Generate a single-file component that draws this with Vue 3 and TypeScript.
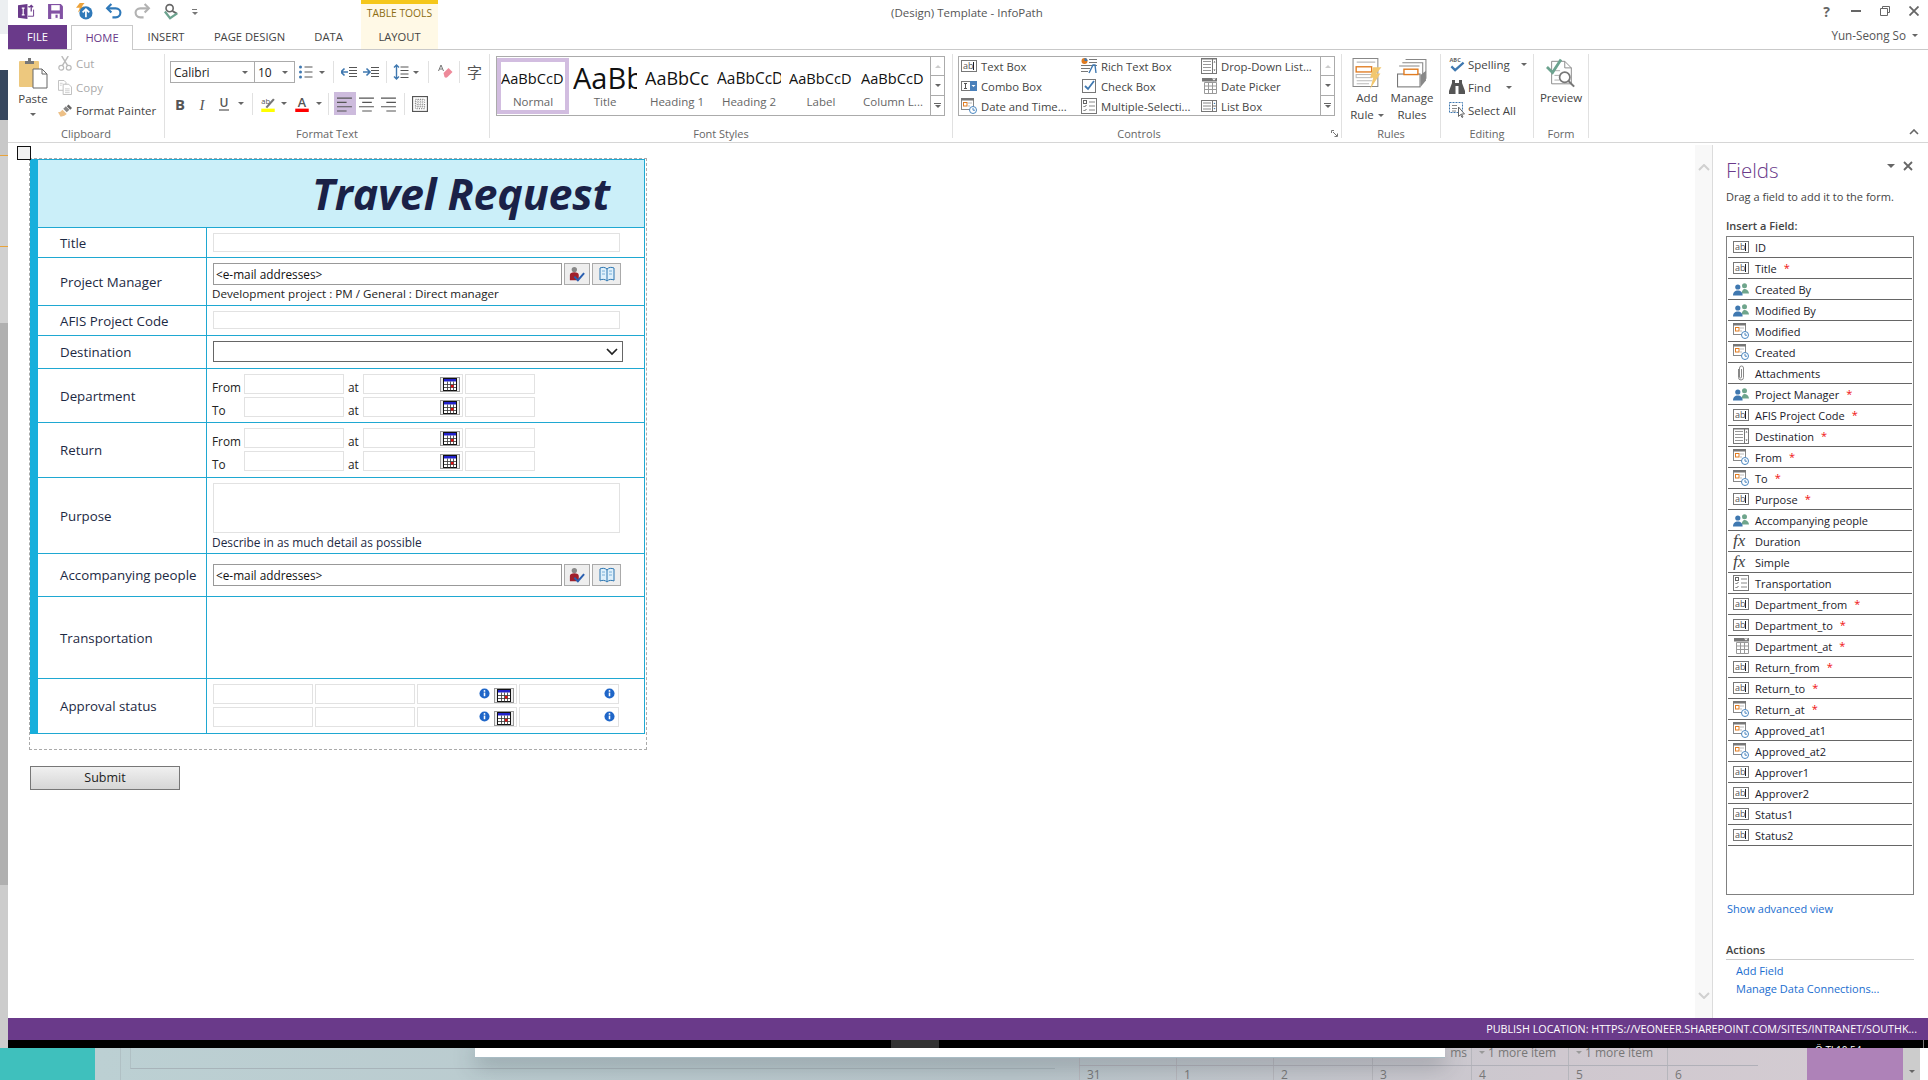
<script setup lang="ts">
interface Tool { w: number; icon?: string; caret?: boolean; sep?: boolean; active?: boolean }
interface Field { name: string; icon: string; req?: boolean }

const qat = ['qLogo', 'qSave', 'qPublish', 'qUndo', 'qRedo', 'qCheck']

const fmtTop: Tool[] = [
  { w: 21, icon: 'bullets' }, { w: 12, caret: true }, { w: 10, sep: true },
  { w: 22, icon: 'outdent' }, { w: 22, icon: 'indent' }, { w: 8, sep: true },
  { w: 21, icon: 'spacing' }, { w: 10, caret: true }, { w: 14, sep: true },
  { w: 20, icon: 'eraser' }, { w: 8, sep: true }, { w: 24, icon: 'zi' },
]
const fmtBottom: Tool[] = [
  { w: 20, icon: 'bold' }, { w: 24, icon: 'italic' }, { w: 20, icon: 'under' },
  { w: 14, caret: true }, { w: 8, sep: true }, { w: 24, icon: 'hilite' },
  { w: 8, caret: true }, { w: 28, icon: 'color' }, { w: 6, caret: true },
  { w: 12, sep: true }, { w: 22, icon: 'alLeft', active: true }, { w: 22, icon: 'alCenter' },
  { w: 22, icon: 'alRight' }, { w: 8, sep: true }, { w: 24, icon: 'tableGrid' },
]
const styles = [
  { label: 'Normal', sample: 'AaBbCcD', kind: 'normal' },
  { label: 'Title', sample: 'AaBb', kind: 'title' },
  { label: 'Heading 1', sample: 'AaBbCc', kind: 'h1' },
  { label: 'Heading 2', sample: 'AaBbCcD', kind: 'h2' },
  { label: 'Label', sample: 'AaBbCcD', kind: 'normal' },
  { label: 'Column L...', sample: 'AaBbCcD', kind: 'normal' },
]
const controls = [
  { label: 'Text Box', icon: 'ab' }, { label: 'Rich Text Box', icon: 'rich' }, { label: 'Drop-Down List...', icon: 'list' },
  { label: 'Combo Box', icon: 'combo' }, { label: 'Check Box', icon: 'checkbox' }, { label: 'Date Picker', icon: 'date' },
  { label: 'Date and Time...', icon: 'dt' }, { label: 'Multiple-Selecti...', icon: 'multi' }, { label: 'List Box', icon: 'listbox' },
]
const fields: Field[] = [
  { name: 'ID', icon: 'ab' },
  { name: 'Title', icon: 'ab', req: true },
  { name: 'Created By', icon: 'people' },
  { name: 'Modified By', icon: 'people' },
  { name: 'Modified', icon: 'dt' },
  { name: 'Created', icon: 'dt' },
  { name: 'Attachments', icon: 'clip' },
  { name: 'Project Manager', icon: 'people', req: true },
  { name: 'AFIS Project Code', icon: 'ab', req: true },
  { name: 'Destination', icon: 'list', req: true },
  { name: 'From', icon: 'dt', req: true },
  { name: 'To', icon: 'dt', req: true },
  { name: 'Purpose', icon: 'ab', req: true },
  { name: 'Accompanying people', icon: 'people' },
  { name: 'Duration', icon: 'fx' },
  { name: 'Simple', icon: 'fx' },
  { name: 'Transportation', icon: 'multi' },
  { name: 'Department_from', icon: 'ab', req: true },
  { name: 'Department_to', icon: 'ab', req: true },
  { name: 'Department_at', icon: 'date', req: true },
  { name: 'Return_from', icon: 'ab', req: true },
  { name: 'Return_to', icon: 'ab', req: true },
  { name: 'Return_at', icon: 'dt', req: true },
  { name: 'Approved_at1', icon: 'dt' },
  { name: 'Approved_at2', icon: 'dt' },
  { name: 'Approver1', icon: 'ab' },
  { name: 'Approver2', icon: 'ab' },
  { name: 'Status1', icon: 'ab' },
  { name: 'Status2', icon: 'ab' },
]
const schedule = ['From', 'To']
const calNumbers = ['31', '1', '2', '3', '4', '5', '6']
</script>

<template>
  <!-- icon sheet -->
  <svg class="sheet" aria-hidden="true">
    <defs>
      <symbol id="qLogo" viewBox="0 0 18 16"><path d="M0 1.500 10 0v16L0 14.500z" fill="#6a3a8a"/><path d="M4 4.500h3M5.500 4.500v7M4 11.500h3" stroke="#fff" stroke-width="1.300" fill="none"/><path d="M10.500 3h2M10.500 13h6V6" stroke="#6a3a8a" fill="none"/><path d="M14 8V1.500M12 3.500l2-2 2 2" stroke="#6a3a8a" stroke-width="1.300" fill="none"/></symbol>
      <symbol id="qSave" viewBox="0 0 16 16"><path d="M1 1h12l2 2v12H1z" fill="#8252a4"/><rect x="4" y="2" width="8" height="5" fill="#fff"/><rect x="4" y="10" width="8" height="5" fill="#fff"/><rect x="8" y="11" width="2" height="3" fill="#8252a4"/></symbol>
      <symbol id="qPublish" viewBox="0 0 18 18"><path d="M4 0h5L6 4h3L2 10l2-5H0z" fill="#eda33a"/><circle cx="10.500" cy="10.500" r="7" fill="#2f79b9"/><path d="M10.500 15V7M7 10l3.500-3.500L14 10" stroke="#fff" stroke-width="1.800" fill="none"/></symbol>
      <symbol id="qUndo" viewBox="0 0 16 16"><path d="M2 5h8c3 0 4.500 2 4.500 4S13 13.500 10 13.500H7" stroke="#2f79b9" stroke-width="2" fill="none"/><path d="M6 1 2 5l4 4" stroke="#2f79b9" stroke-width="2" fill="none"/></symbol>
      <symbol id="qRedo" viewBox="0 0 16 16"><path d="M14 5H6C3 5 1.500 7 1.500 9S3 13.500 6 13.500h3" stroke="#b2b2b2" stroke-width="2" fill="none"/><path d="m10 1 4 4-4 4" stroke="#b2b2b2" stroke-width="2" fill="none"/></symbol>
      <symbol id="qCheck" viewBox="0 0 16 18"><circle cx="6" cy="5.500" r="3.800" fill="none" stroke="#666" stroke-width="1.700"/><path d="m9 8.500 5 3" stroke="#666" stroke-width="2"/><path d="m1 9 5.500 7L14 11" stroke="#6ca38f" stroke-width="2.400" fill="none"/></symbol>

      <symbol id="paste" viewBox="0 0 29 32"><rect x="0" y="3" width="20" height="26" rx="1" fill="#edc87e"/><path d="M6 3h3V0h3v3h3v3H6z" fill="#777"/><path d="M14 11h9l5 5v14H14z" fill="#fff" stroke="#666"/><path d="M23 11v5h5" fill="none" stroke="#666"/></symbol>
      <symbol id="cut" viewBox="0 0 15 16"><circle cx="3.500" cy="12.500" r="2.600" fill="none" stroke="#bbb" stroke-width="1.300"/><circle cx="11.500" cy="12.500" r="2.600" fill="none" stroke="#bbb" stroke-width="1.300"/><path d="M4.500 10.500 11 0M10.500 10.500 4 0" stroke="#bbb" stroke-width="1.500"/></symbol>
      <symbol id="copy" viewBox="0 0 15 16"><path d="M.5.500h6l2 2V11H.5z" fill="#fff" stroke="#bbb"/><path d="M5.500 4.500h6l3 3v8h-9z" fill="#fff" stroke="#bbb"/><path d="M7.500 9.500h5M7.500 11.500h5M7.500 13.500h5M2 3.500h3M2 5.500h2" stroke="#ccc"/></symbol>
      <symbol id="painter" viewBox="0 0 16 14"><path d="M0 9c3 0 4-2 5-3l5 5c-1 1-4 3-7 3z" fill="#edc087"/><path d="m6 5 3-3 4 4-3 3z" fill="#888"/><path d="m10 2 2-2 4 4-2 2z" fill="#666"/></symbol>

      <symbol id="bullets" viewBox="0 0 15 16"><circle cx="2" cy="3" r="1.500" fill="#3f78b0"/><circle cx="2" cy="8" r="1.500" fill="#3f78b0"/><circle cx="2" cy="13" r="1.500" fill="#3f78b0"/><path d="M6 3h8M6 8h8M6 13h8" stroke="#555"/></symbol>
      <symbol id="outdent" viewBox="0 0 16 12"><path d="M8 1.500h8M8 4.500h8M8 7.500h8M8 10.500h8" stroke="#555"/><path d="M0 6h7M3.500 2.500 0 6l3.500 3.500" stroke="#3f78b0" stroke-width="1.600" fill="none"/></symbol>
      <symbol id="indent" viewBox="0 0 16 12"><path d="M8 1.500h8M8 4.500h8M8 7.500h8M8 10.500h8" stroke="#555"/><path d="M7 6H0M3.500 2.500 7 6 3.500 9.500" stroke="#3f78b0" stroke-width="1.600" fill="none"/></symbol>
      <symbol id="spacing" viewBox="0 0 15 16"><path d="M3 1v14M.5 3.500 3 1l2.500 2.500M.5 12.500 3 15l2.500-2.500" stroke="#3f78b0" stroke-width="1.400" fill="none"/><path d="M7 3h8M7 6.500h8M7 10h8M7 13.500h8" stroke="#555"/></symbol>
      <symbol id="eraser" viewBox="0 0 15 16"><path d="m6 9 5-5 4 4-5 5c-1 1-2 1-3 0z" fill="#ee8a9a"/><path d="m1 7 2.500-6L6 7M2 5h3" stroke="#777" fill="none"/></symbol>
      <symbol id="zi" viewBox="0 0 16 16"><text x="0" y="14" font-size="15" fill="#555" font-family="Noto Sans CJK SC, sans-serif">字</text></symbol>
      <symbol id="bold" viewBox="0 0 14 14"><text x="7" y="12" text-anchor="middle" font-size="13" font-weight="700" fill="#555" font-family="Open Sans, sans-serif">B</text></symbol>
      <symbol id="italic" viewBox="0 0 14 14"><text x="7" y="12" text-anchor="middle" font-size="13" font-style="italic" fill="#555" font-family="Liberation Serif, serif">I</text></symbol>
      <symbol id="under" viewBox="0 0 14 16"><text x="7" y="11" text-anchor="middle" font-size="12" font-weight="600" fill="#555" font-family="Open Sans, sans-serif">U</text><path d="M2 14h10" stroke="#555" stroke-width="1.200"/></symbol>
      <symbol id="hilite" viewBox="0 0 16 19"><text x="0" y="9" font-size="9" fill="#555" font-family="Open Sans, sans-serif">ab</text><path d="m5 13 9-10 2 1.500-9 10z" fill="#777"/><rect y="15" width="16" height="4" fill="#ff0"/></symbol>
      <symbol id="color" viewBox="0 0 16 19"><text x="8" y="13" text-anchor="middle" font-size="15" font-weight="600" fill="#555" font-family="Open Sans, sans-serif">A</text><rect y="15" width="16" height="4" fill="#f00"/></symbol>
      <symbol id="alLeft" viewBox="0 0 15 14"><path d="M0 1.500h14M0 5.500h9M0 9.500h14M0 13.500h9" stroke="#555"/></symbol>
      <symbol id="alCenter" viewBox="0 0 15 14"><path d="M0 1.500h14M3 5.500h9M0 9.500h14M3 13.500h9" stroke="#555"/></symbol>
      <symbol id="alRight" viewBox="0 0 15 14"><path d="M0 1.500h14M5 5.500h9M0 9.500h14M5 13.500h9" stroke="#555"/></symbol>
      <symbol id="tableGrid" viewBox="0 0 14 14"><rect x=".5" y=".5" width="13" height="13" fill="#fff" stroke="#555"/><path d="M3 3h8v8H3z" fill="none" stroke="#888" stroke-dasharray="1 1"/><path d="M5 3v8M7 3v8M9 3v8M3 5h8M3 7h8M3 9h8" stroke="#999" stroke-dasharray="1 1"/></symbol>

      <symbol id="ab" viewBox="0 0 16 16"><rect x=".5" y="2.500" width="15" height="11" fill="#fff" stroke="#777"/><text x="2" y="11" font-size="9" fill="#555" font-family="Open Sans, sans-serif">ab</text><path d="M12.500 4v8" stroke="#222"/></symbol>
      <symbol id="combo" viewBox="0 0 16 16"><rect x=".5" y="3.500" width="15" height="9" fill="#fff" stroke="#777"/><path d="M3 5.500h3M4.500 5.500v5M3 10.500h3" stroke="#555" fill="none"/><rect x="9" y="3" width="7" height="10" fill="#4a80ba"/><path d="m10.500 7 2 2 2-2z" fill="#fff"/></symbol>
      <symbol id="dt" viewBox="0 0 16 16"><rect x=".5" y=".5" width="12" height="11" fill="#fff" stroke="#888"/><rect x="0" y="0" width="13" height="2.500" fill="#777"/><path d="M7 5h4M7 8h2" stroke="#bbb"/><rect x="2.500" y="4.500" width="3.500" height="3.500" fill="#fff" stroke="#e07b20"/><circle cx="12" cy="12" r="3.500" fill="#fff" stroke="#4a86c0"/><path d="M12 10v2.200h2" stroke="#4a86c0" fill="none"/></symbol>
      <symbol id="rich" viewBox="0 0 16 16"><circle cx="3.500" cy="3" r="3" fill="#e07b20"/><path d="M3.500 3V0a3 3 0 0 1 3 3z" fill="#3f78b0"/><path d="M8 1.500h8M8 4.500h8M0 7.500h16M0 10.500h9M0 13.500h7" stroke="#777"/><path d="m8 15 4-8h2l1 8" fill="none" stroke="#3f78b0" stroke-width="1.400"/></symbol>
      <symbol id="checkbox" viewBox="0 0 16 16"><rect x="1.500" y="1.500" width="13" height="13" fill="#fff" stroke="#777"/><path d="m4 8 3 3 6-8" stroke="#3f78b0" stroke-width="1.800" fill="none"/></symbol>
      <symbol id="multi" viewBox="0 0 16 16"><rect x=".5" y=".5" width="15" height="15" fill="#fff" stroke="#777"/><rect x="2.500" y="2.500" width="3" height="3" fill="none" stroke="#666"/><path d="m2.500 8 1 1 2-2M2.500 12l1 1 2-2" stroke="#666" fill="none"/><path d="M8 4h6M8 8h6M8 12h6" stroke="#888"/></symbol>
      <symbol id="list" viewBox="0 0 16 16"><rect x=".5" y=".5" width="15" height="15" fill="#fff" stroke="#777"/><path d="M2 3.500h8M2 6.500h8M2 9.500h8M2 12.500h8" stroke="#999"/><path d="M11.500 0v16" stroke="#777"/><path d="m12.500 4.500 1-1.500 1 1.500zM12.500 11.500l1 1.500 1-1.500z" fill="#555"/><rect y="0" width="16" height="1.500" fill="#777"/></symbol>
      <symbol id="date" viewBox="0 0 16 16"><rect x="1" y="0" width="15" height="3.500" fill="#777"/><path d="m11 .5 2 2 2-2z" fill="#fff"/><path d="M3.500 4.500h12v11h-12z" fill="#fff" stroke="#999"/><path d="M3.500 8h12M3.500 11.500h12M7.500 4.500v11M11.500 4.500v11" stroke="#999"/></symbol>
      <symbol id="listbox" viewBox="0 0 16 16"><rect x=".5" y="2.500" width="15" height="11" fill="#fff" stroke="#777"/><path d="M2 5h8M2 8h8M2 11h8" stroke="#888"/><path d="M11.500 2.500v11M11.500 8h4" stroke="#777"/><path d="m12.500 6 1-1.500 1 1.500zM12.500 10l1 1.500 1-1.500z" fill="#3f78b0"/></symbol>
      <symbol id="people" viewBox="0 0 16 16"><circle cx="11.500" cy="4.800" r="2.500" fill="#6fa58c"/><path d="M8.500 12.500c.5-3 1.500-4.500 3-4.500s4 1 4.500 4.500z" fill="#6fa58c"/><circle cx="4.800" cy="6" r="2.600" fill="#3f78b0"/><path d="M0 14.500c0-3.500 2-5 4.800-5s4.800 1.500 4.800 5z" fill="#3f78b0"/></symbol>
      <symbol id="clip" viewBox="0 0 16 16"><path d="M5.500 4v8.500a2.500 2.500 0 0 0 5 0V3a2 2 0 0 0-4 0v9a1 1 0 0 0 2 0V4" fill="none" stroke="#888"/></symbol>
      <symbol id="fx" viewBox="0 0 16 16"><text x="0" y="13" font-size="17" font-style="italic" fill="#444" font-family="Liberation Serif, serif">fx</text></symbol>

      <symbol id="addRule" viewBox="0 0 28 30"><path d="M.5 .5h24v27H.5z" fill="#fff" stroke="#888"/><path d="M4 4h18M4 22h15M4 25h12" stroke="#bbb"/><rect x="3.500" y="8.500" width="15" height="5" fill="#fff" stroke="#e07b20" stroke-width="1.300"/><rect x="3.500" y="16" width="15" height="3" fill="#fff" stroke="#bbb"/><path d="M20 9h8l-5 6h4L17 30l3-11h-3z" fill="#f2c76e"/></symbol>
      <symbol id="manageRules" viewBox="0 0 28 27"><path d="M8 .5h19v18M5 3.500h19v18M2 6.500h19" fill="none" stroke="#888"/><rect x=".5" y="14" width="21" height="12" fill="#fff" stroke="#777"/><rect x="6.500" y="9.500" width="13" height="5" fill="#fff" stroke="#e07b20" stroke-width="1.300"/><path d="m22 15 5-4v9l-5 6z" fill="#888"/></symbol>
      <symbol id="spell" viewBox="0 0 16 17"><text x="0" y="6" font-size="6" font-weight="700" fill="#666" font-family="Open Sans, sans-serif">ABC</text><path d="m2 11 4 4 9-8" stroke="#3f78b0" stroke-width="2.400" fill="none"/></symbol>
      <symbol id="binoc" viewBox="0 0 16 14"><path d="M3 0h3v3h4V0h3v3l3 8v3H9.500V6h-3v8H0v-3l3-8z" fill="#555"/></symbol>
      <symbol id="selectAll" viewBox="0 0 16 16"><rect x=".5" y=".5" width="13" height="10" fill="none" stroke="#3f78b0" stroke-dasharray="2 1"/><path d="M3 3.500h5M3 6.500h5M3 9h4" stroke="#888"/><path d="M9.500 5v9.500l2-2 1.500 3 1-.5-1.500-3h3z" fill="#fff" stroke="#666"/></symbol>
      <symbol id="preview" viewBox="0 0 32 32"><path d="M6 3h14l7 7v17H6z" fill="#fff" stroke="#888"/><path d="M20 3v7h7" fill="none" stroke="#888"/><path d="M9 13h6M9 18h5M9 23h5" stroke="#aaa"/><path d="m1 9 6 6L16 1" stroke="#6ca38f" stroke-width="3" fill="none"/><circle cx="20" cy="20" r="5.500" fill="#fff" stroke="#777" stroke-width="1.800"/><path d="m24 24 6 6" stroke="#777" stroke-width="2.200"/></symbol>

      <symbol id="person" viewBox="0 0 18 18"><circle cx="6" cy="4" r="3" fill="#888"/><path d="M1 16V10c0-2 2-3 5-3s5 1 5 3v6z" fill="#a0202c"/><path d="m6 12 4 4 7-8" stroke="#2a5fb0" stroke-width="2.200" fill="none"/></symbol>
      <symbol id="book" viewBox="0 0 16 16"><path d="M1 2c2.500-1 5-1 7 1 2-2 4.500-2 7-1v12c-2.500-1-5-1-7 1-2-2-4.500-2-7-1z" fill="#dff0fb" stroke="#2a74b0"/><path d="M8 3v11" stroke="#2a74b0"/><path d="M3 5h3M3 8h3M10 5h3M10 8h3" stroke="#7ab0d8"/></symbol>
      <symbol id="cal" viewBox="0 0 14 13"><rect x=".5" y=".5" width="13" height="12" fill="#fff" stroke="#111"/><rect x="1" y="1" width="12" height="2.500" fill="#2222cc"/><path d="M1 6.500h12M1 9.500h12M4.500 3.500v9M7.500 3.500v9M10.500 3.500v9" stroke="#333" stroke-width=".8"/><rect x="8" y="7" width="2.500" height="2.500" fill="#e01010"/></symbol>
      <symbol id="info" viewBox="0 0 12 12"><circle cx="6" cy="6" r="5.500" fill="#1f66c8"/><circle cx="6" cy="3.200" r="1" fill="#fff"/><path d="M6 5v4" stroke="#fff" stroke-width="1.700"/></symbol>
    </defs>
  </svg>

  <div class="screen">
    <div class="main">
      <div class="strip">
        <div class="s1"></div>
        <div class="s2"></div>
        <div class="s3"></div>
        <div class="s4"></div>
        <div class="s5"></div>
        <div class="s6"></div>
      </div>

      <div class="window">
        <!-- title bar -->
        <div class="titlebar">
          <div class="qat">
            <span v-for="q in qat" :key="q" class="qbtn"><svg class="qicon"><use :href="'#' + q" /></svg></span>
            <span class="qmore"><i></i><b></b></span>
          </div>
          <div class="tt-head">TABLE TOOLS</div>
          <div class="doc-title">(Design) Template - InfoPath</div>
          <div class="winbtns">
            <span class="help">?</span>
            <span class="wb"><i class="w-min"></i></span>
            <span class="wb"><svg class="w-res" viewBox="0 0 10 10"><path d="M2.500 2.500V.5h7v6h-2M.5 2.500h7v7h-7z" fill="none" stroke="#666"/></svg></span>
            <span class="wb"><svg class="w-res" viewBox="0 0 10 10"><path d="m.5.500 9 9M9.500.5l-9 9" stroke="#666" stroke-width="1.800"/></svg></span>
          </div>
        </div>
        <!-- tabs -->
        <div class="tabs">
          <div class="tab file">FILE</div>
          <div class="tab home">HOME</div>
          <div class="tab t-insert">INSERT</div>
          <div class="tab t-page">PAGE DESIGN</div>
          <div class="tab t-data">DATA</div>
          <div class="tab t-layout">LAYOUT</div>
          <div class="user">Yun-Seong So<span class="caret"></span></div>
        </div>

        <!-- ribbon -->
        <div class="ribbon">
          <section class="group g-clip">
            <div class="gbody clip-body">
              <div class="paste">
                <svg class="paste-ic"><use href="#paste" /></svg>
                <div>Paste</div>
                <span class="caret"></span>
              </div>
              <div class="clip-list">
                <div class="clip-item off"><svg class="ic15"><use href="#cut" /></svg>Cut</div>
                <div class="clip-item off r2"><svg class="ic15"><use href="#copy" /></svg>Copy</div>
                <div class="clip-item r3"><svg class="ic15"><use href="#painter" /></svg>Format Painter</div>
              </div>
            </div>
            <div class="glabel">Clipboard</div>
          </section>

          <section class="group g-format">
            <div class="gbody fmt-body">
              <div class="fmt-row">
                <div class="combo font-name">Calibri<span class="caret"></span></div>
                <div class="combo font-size">10<span class="caret"></span></div>
                <template v-for="(t, i) in fmtTop" :key="i">
                  <span class="tool" :style="{ width: t.w + 'px' }">
                    <i v-if="t.sep" class="vsep"></i>
                    <span v-else-if="t.caret" class="caret"></span>
                    <svg v-else class="ic16"><use :href="'#' + t.icon" /></svg>
                  </span>
                </template>
              </div>
              <div class="fmt-row row2">
                <template v-for="(t, i) in fmtBottom" :key="i">
                  <span class="tool" :class="{ active: t.active }" :style="{ width: t.w + 'px' }">
                    <i v-if="t.sep" class="vsep"></i>
                    <span v-else-if="t.caret" class="caret"></span>
                    <svg v-else class="ic16"><use :href="'#' + t.icon" /></svg>
                  </span>
                </template>
              </div>
            </div>
            <div class="glabel">Format Text</div>
          </section>

          <section class="group g-styles">
            <div class="gbody">
              <div class="gallery style-gallery">
                <div class="style-items">
                  <div v-for="(s, i) in styles" :key="s.label" class="style-item" :class="{ current: i === 0 }">
                    <div class="sample" :class="s.kind">{{ s.sample }}</div>
                    <div class="style-label">{{ s.label }}</div>
                  </div>
                </div>
                <div class="gscroll">
                  <span><i class="tri up"></i></span>
                  <span><i class="tri"></i></span>
                  <span class="more"><i class="tri"></i></span>
                </div>
              </div>
            </div>
            <div class="glabel">Font Styles</div>
          </section>

          <section class="group g-controls">
            <div class="gbody">
              <div class="gallery control-gallery">
                <div class="control-items">
                  <div v-for="c in controls" :key="c.label" class="control-item">
                    <svg class="ic16"><use :href="'#' + c.icon" /></svg>{{ c.label }}
                  </div>
                </div>
                <div class="gscroll">
                  <span><i class="tri up"></i></span>
                  <span><i class="tri"></i></span>
                  <span class="more"><i class="tri"></i></span>
                </div>
              </div>
            </div>
            <div class="glabel controls-label">Controls<svg class="launcher" viewBox="0 0 7 7"><path d="M.5 3V.5H3M2 2l4 4M3.500 6.500h3v-3" stroke="#777" fill="none"/></svg></div>
          </section>

          <section class="group g-rules">
            <div class="gbody rules-body">
              <div class="big add-rule">
                <svg class="big-ic"><use href="#addRule" /></svg>
                <div>Add</div>
                <div>Rule<span class="caret inline"></span></div>
              </div>
              <div class="big manage">
                <svg class="big-ic"><use href="#manageRules" /></svg>
                <div>Manage</div>
                <div>Rules</div>
              </div>
            </div>
            <div class="glabel">Rules</div>
          </section>

          <section class="group g-editing">
            <div class="gbody edit-body">
              <div class="edit-item"><svg class="ic16"><use href="#spell" /></svg>Spelling<span class="caret c-spell"></span></div>
              <div class="edit-item"><svg class="ic16"><use href="#binoc" /></svg>Find<span class="caret c-find"></span></div>
              <div class="edit-item"><svg class="ic16"><use href="#selectAll" /></svg>Select All</div>
            </div>
            <div class="glabel">Editing</div>
          </section>

          <section class="group g-form">
            <div class="gbody">
              <div class="big">
                <svg class="big-ic"><use href="#preview" /></svg>
                <div>Preview</div>
              </div>
            </div>
            <div class="glabel">Form</div>
          </section>

          <div class="collapse">
            <svg viewBox="0 0 10 6"><path d="m1 5 4-4 4 4" stroke="#666" stroke-width="1.600" fill="none"/></svg>
          </div>
        </div>

        <!-- work area -->
        <div class="work">
          <div class="canvas">
            <div class="frame">
              <span class="handle"></span>
              <div class="form">
                <div class="head">Travel Request</div>
                <div class="row r-30">
                  <div class="lbl">Title</div>
                  <div class="cell"><div class="in in-wide"></div></div>
                </div>
                <div class="row r-48">
                  <div class="lbl">Project Manager</div>
                  <div class="cell">
                    <div class="people-row">
                      <div class="email">&lt;e-mail addresses&gt;</div>
                      <span class="pbtn"><svg class="ic16"><use href="#person" /></svg></span>
                      <span class="pbtn wide"><svg class="ic16"><use href="#book" /></svg></span>
                    </div>
                    <div class="hint">Development project : PM / General : Direct manager</div>
                  </div>
                </div>
                <div class="row r-30">
                  <div class="lbl">AFIS Project Code</div>
                  <div class="cell"><div class="in in-wide in-afis"></div></div>
                </div>
                <div class="row r-33">
                  <div class="lbl">Destination</div>
                  <div class="cell">
                    <div class="select">
                      <svg viewBox="0 0 12 8"><path d="m1 1 5 5 5-5" stroke="#222" stroke-width="1.700" fill="none"/></svg>
                    </div>
                  </div>
                </div>
                <div class="row r-54">
                  <div class="lbl">Department</div>
                  <div class="cell sched">
                    <div v-for="s in schedule" :key="s" class="sched-row">
                      <span class="sched-lbl">{{ s }}</span>
                      <div class="in in-date"></div>
                      <span class="at">at</span>
                      <div class="in in-date with-cal"><span class="calbtn"><svg class="cal-ic"><use href="#cal" /></svg></span></div>
                      <div class="in in-time"></div>
                    </div>
                  </div>
                </div>
                <div class="row r-55">
                  <div class="lbl">Return</div>
                  <div class="cell sched">
                    <div v-for="s in schedule" :key="s" class="sched-row">
                      <span class="sched-lbl">{{ s }}</span>
                      <div class="in in-date"></div>
                      <span class="at">at</span>
                      <div class="in in-date with-cal"><span class="calbtn"><svg class="cal-ic"><use href="#cal" /></svg></span></div>
                      <div class="in in-time"></div>
                    </div>
                  </div>
                </div>
                <div class="row r-76">
                  <div class="lbl">Purpose</div>
                  <div class="cell">
                    <div class="in in-wide in-area"></div>
                    <div class="hint hint-area">Describe in as much detail as possible</div>
                  </div>
                </div>
                <div class="row r-43">
                  <div class="lbl">Accompanying people</div>
                  <div class="cell">
                    <div class="people-row accompany">
                      <div class="email">&lt;e-mail addresses&gt;</div>
                      <span class="pbtn"><svg class="ic16"><use href="#person" /></svg></span>
                      <span class="pbtn wide"><svg class="ic16"><use href="#book" /></svg></span>
                    </div>
                  </div>
                </div>
                <div class="row r-82">
                  <div class="lbl">Transportation</div>
                  <div class="cell"></div>
                </div>
                <div class="row r-55">
                  <div class="lbl">Approval status</div>
                  <div class="cell approval">
                    <div v-for="n in 2" :key="n" class="appr-row">
                      <div class="in in-appr"></div>
                      <div class="in in-appr"></div>
                      <div class="in in-appr appr-end">
                        <svg class="info"><use href="#info" /></svg>
                        <span class="calbtn appr-cal"><svg class="cal-ic"><use href="#cal" /></svg></span>
                      </div>
                      <div class="in in-appr appr-end last">
                        <svg class="info"><use href="#info" /></svg>
                      </div>
                    </div>
                  </div>
                </div>
              </div>
            </div>
            <button class="submit">Submit</button>
          </div>

          <div class="vscroll">
            <svg viewBox="0 0 12 7"><path d="m1 6 5-5 5 5" stroke="#d0d0d0" stroke-width="2" fill="none"/></svg>
            <svg viewBox="0 0 12 7"><path d="m1 1 5 5 5-5" stroke="#d0d0d0" stroke-width="2" fill="none"/></svg>
          </div>

          <aside class="pane">
            <div class="pane-head">
              <span class="pane-title">Fields</span>
              <i class="tri pane-tri"></i>
              <svg class="pane-x" viewBox="0 0 10 10"><path d="m1 1 8 8M9 1 1 9" stroke="#666" stroke-width="1.800"/></svg>
            </div>
            <div class="pane-note">Drag a field to add it to the form.</div>
            <div class="pane-sub">Insert a Field:</div>
            <div class="field-list">
              <div v-for="f in fields" :key="f.name" class="field">
                <svg class="ic16"><use :href="'#' + f.icon" /></svg>
                <span>{{ f.name }}</span>
                <span v-if="f.req" class="star">*</span>
              </div>
            </div>
            <a class="link adv">Show advanced view</a>
            <div class="actions">Actions</div>
            <a class="link act act1">Add Field</a>
            <a class="link act act2">Manage Data Connections...</a>
          </aside>
        </div>

        <div class="status">PUBLISH LOCATION: HTTPS://VEONEER.SHAREPOINT.COM/SITES/INTRANET/SOUTHK...</div>
        <div class="black">
          <span class="black-tab"></span>
          <span class="black-clock">Ö Tl 10:54</span>
          <span class="black-line"></span>
        </div>
      </div>
    </div>

    <!-- what is behind the window -->
    <div class="behind">
      <div class="teal"></div>
      <div class="desktop">
        <div class="old-panel"></div>
        <div class="calendar">
          <div class="cal-top">
            <span class="c-cell"></span><span class="c-cell"></span><span class="c-cell"></span>
            <span class="c-cell c-ms">ms</span>
            <span class="c-cell"><i class="tri dim"></i>1 more item</span>
            <span class="c-cell"><i class="tri dim"></i>1 more item</span>
            <span class="c-cell"></span>
          </div>
          <div class="cal-days">
            <span v-for="n in calNumbers" :key="n" class="c-cell">{{ n }}</span>
          </div>
        </div>
        <div class="purple-block"></div>
        <div class="bscroll"><i class="tri"></i></div>
        <div class="dialog"></div>
      </div>
    </div>
  </div>
</template>

<style>
html, body { margin: 0; background: #fff; overflow: hidden; }
</style>

<style scoped>
* { box-sizing: border-box; }
.sheet { position: absolute; width: 0; height: 0; }
.screen {
  width: 1928px; height: 1080px; display: flex; flex-direction: column; overflow: hidden;
  font-family: "Open Sans", "Noto Sans", sans-serif; font-size: 11.5px; color: #444; background: #fff;
}
.main { display: flex; height: 1048px; }
.strip { width: 8px; display: flex; flex-direction: column; }
.s1 { height: 34px; background: #eceff1; }
.s2 { height: 36px; background: #fff; }
.s3 { height: 50px; background: #37475f; }
.s4 { height: 35px; background: #c8c8c8; }
.s5 { height: 730px; background: linear-gradient(#e8a33a 0, #e8a33a 1px, #d0d0d0 1px, #d0d0d0 91px, #e8a33a 91px, #e8a33a 92px, #d0d0d0 92px, #d0d0d0 168px, #b0b0b0 168px); }
.s6 { flex: 1; background: #ccc; }
.window { flex: 1; display: flex; flex-direction: column; min-width: 0; }

.titlebar { height: 25px; display: flex; }
.qat { width: 353px; display: flex; padding-left: 4px; }
.qbtn { width: 29px; display: flex; align-items: center; justify-content: center; height: 22px; }
.qicon { width: 17px; height: 17px; }
.qmore { width: 17px; display: flex; flex-direction: column; align-items: center; justify-content: center; height: 24px; gap: 2px; }
.qmore i { width: 5px; height: 1px; background: #777; }
.qmore b { width: 0; height: 0; border: 3px solid transparent; border-top-color: #777; border-bottom: 0; }
.tt-head { width: 77px; background: #fff9e6; border-top: 4px solid #f5c71a; color: #8d6e12; text-align: center; line-height: 18px; font-size: 10.3px; }
.doc-title { flex: 1; padding-left: 453px; line-height: 26px; font-size: 11.5px; color: #555; white-space: nowrap; }
.winbtns { display: flex; height: 22px; }
.wb, .help { width: 29px; display: flex; align-items: center; justify-content: center; }
.help { font-weight: 700; font-size: 14px; color: #666; }
.w-min { width: 10px; height: 2px; background: #666; }
.w-res { width: 10px; height: 10px; }

.tabs { height: 25px; display: flex; border-bottom: 1px solid #c9c9c9; font-size: 11.2px; }
.tab { line-height: 24px; text-align: center; color: #444; }
.file { width: 59px; background: #6a3a8a; color: #fff; margin-right: 4px; }
.home { width: 62px; color: #6a3a8a; background: #fff; border: 1px solid #c9c9c9; border-bottom: 0; height: 25px; line-height: 23px; }
.t-insert { width: 66px; }
.t-page { width: 101px; }
.t-data { width: 57px; margin-right: 4px; }
.t-layout { width: 77px; background: #fff9e6; }
.user { margin-left: auto; padding-right: 10px; line-height: 20px; color: #555; display: flex; align-items: center; gap: 6px; height: 20px; font-size: 11.7px; }

.caret { display: inline-block; width: 0; height: 0; border: 3px solid transparent; border-top-color: #666; border-bottom: 0; }
.caret.inline { margin-left: 4px; vertical-align: middle; }

.ribbon { height: 93px; display: flex; padding-top: 4px; border-bottom: 1px solid #d6d6d6; }
.group { height: 84px; display: flex; flex-direction: column; border-right: 1px solid #e1e1e1; flex: none; }
.gbody { height: 73px; }
.glabel { height: 11px; line-height: 14px; text-align: center; color: #666; position: relative; font-size: 11px; }
.controls-label { padding-right: 16px; }
.g-clip { width: 157px; }
.g-format { width: 325px; }
.g-styles { width: 463px; }
.g-controls { width: 389px; }
.g-rules { width: 99px; }
.g-editing { width: 93px; }
.g-form { width: 55px; }
.collapse { flex: 1; display: flex; justify-content: flex-end; align-items: flex-end; padding: 0 9px 3px 0; height: 84px; }
.collapse svg { width: 10px; height: 6px; }

.clip-body { display: flex; }
.paste { width: 50px; display: flex; flex-direction: column; align-items: center; padding-top: 4px; line-height: 18px; color: #444; }
.paste-ic { width: 29px; height: 32px; }
.paste .caret { margin-top: 5px; }
.clip-list { display: flex; flex-direction: column; }
.clip-item { height: 18px; display: flex; align-items: center; gap: 4px; white-space: nowrap; }
.clip-item.off { color: #aaa; }
.r2 { margin-top: 6px; }
.r3 { margin-top: 5px; }
.ic15 { width: 14px; height: 15px; flex: none; }
.ic16 { width: 16px; height: 16px; flex: none; }

.fmt-body { padding: 7px 0 0 5px; }
.fmt-row { display: flex; height: 22px; align-items: center; }
.row2 { margin-top: 9px; height: 23px; }
.combo { height: 22px; border: 1px solid #ababab; display: flex; align-items: center; justify-content: space-between; padding: 0 6px 0 3px; color: #222; font-size: 12px; background: #fff; }
.font-name { width: 85px; }
.font-size { width: 40px; border-left: 0; }
.tool { height: 23px; display: flex; align-items: center; justify-content: center; flex: none; }
.tool.active { background: #cdbbdd; }
.vsep { width: 1px; height: 22px; background: #e1e1e1; }

.gallery { display: flex; border: 1px solid #ababab; height: 60px; margin-top: 2px; }
.style-gallery { width: 449px; margin-left: 6px; padding-top: 1px; }
.style-items { width: 433px; display: flex; }
.style-item { width: 72px; height: 56px; padding-top: 2px; text-align: center; flex: none; }
.style-item.current { box-shadow: inset 0 0 0 4px #d2bde0; }
.sample { height: 36px; line-height: 36px; margin: 0 4px; overflow: hidden; white-space: nowrap; color: #111; font-size: 14.6px; text-align: left; }
.sample.title { font-size: 29px; }
.sample.h1 { font-size: 18px; font-weight: 500; }
.sample.h2 { font-size: 15.5px; }
.style-label { line-height: 12px; color: #666; font-size: 11.5px; }
.gscroll { width: 14px; border-left: 1px solid #ababab; display: flex; flex-direction: column; }
.gscroll span { height: 20px; display: flex; align-items: center; justify-content: center; border-bottom: 1px solid #ababab; }
.gscroll span:last-child { border-bottom: 0; flex-direction: column; gap: 1px; }
.more::before { content: ""; width: 7px; height: 1px; background: #666; }
.tri { display: block; width: 0; height: 0; border: 3.5px solid transparent; border-top-color: #666; border-bottom: 0; }
.tri.up { border-top: 0; border-bottom: 3.5px solid #ccc; }
.style-gallery .gscroll { margin-top: -1px; }

.control-gallery { width: 377px; margin-left: 5px; }
.control-items { width: 362px; display: grid; grid-template-columns: repeat(3, 120px); grid-auto-rows: 20px; margin-top: -1px; font-size: 11.3px; }
.control-item { display: flex; align-items: center; gap: 4px; padding-left: 2px; white-space: nowrap; }
.launcher { position: absolute; right: 3px; top: 3px; width: 7px; height: 7px; }

.rules-body { display: flex; padding-left: 2px; }
.big { display: flex; flex-direction: column; align-items: center; padding-top: 4px; line-height: 16.5px; color: #444; white-space: nowrap; }
.big-ic { width: 30px; height: 31px; margin-bottom: 1px; }
.add-rule { width: 46px; }
.manage { width: 44px; }
.edit-body { padding: 1px 0 0 8px; display: flex; flex-direction: column; gap: 5px; }
.edit-item { height: 18px; display: flex; align-items: center; gap: 3px; }
.c-spell { margin-left: 8px; }
.c-find { margin-left: 12px; }

.work { height: 875px; display: flex; }
.canvas { width: 1687px; padding: 15px 0 0 21px; }
.frame { width: 618px; height: 592px; border: 1px dashed #aaa; position: relative; }
.handle { position: absolute; left: -13px; top: -13px; width: 14px; height: 14px; border: 1px solid #111; background: #f2f2f2; }
.form { width: 615px; border-left: 8px solid #17afdc; border-right: 1px solid #1fa8d2; border-top: 1px solid #1fa8d2; border-bottom: 1px solid #1fa8d2; font-size: 13.3px; color: #1d2a44; }
.head { height: 67px; background: #cbeff9; text-align: right; padding-right: 34px; font-size: 43px; line-height: 68px; font-style: italic; font-weight: 700; color: #1a2147; letter-spacing: -.15px; }
.row { display: flex; border-top: 1px solid #1fa8d2; }
.r-30 { height: 30px; }
.r-48 { height: 48px; }
.r-33 { height: 33px; }
.r-54 { height: 54px; }
.r-55 { height: 55px; }
.r-76 { height: 76px; }
.r-43 { height: 43px; }
.r-82 { height: 82px; }
.lbl { width: 169px; padding-left: 22px; display: flex; align-items: center; white-space: nowrap; border-right: 1px solid #1fa8d2; flex: none; }
.cell { flex: 1; padding: 5px 0 0 6px; color: #222; font-size: 11.8px; }
.in { border: 1px solid #e2e2e2; background: #fff; }
.in-wide { width: 407px; height: 19px; }
.in-afis { height: 18px; }
.in-area { height: 50px; }
.people-row { display: flex; height: 22px; gap: 2px; }
.accompany { margin-top: 5px; }
.email { width: 349px; border: 1px solid #999; line-height: 20px; padding-left: 2px; color: #111; }
.pbtn { width: 26px; background: #eee; border: 1px solid #aaa; display: flex; align-items: center; justify-content: center; }
.pbtn.wide { width: 29px; }
.hint { margin: 2px 0 0 -1px; line-height: 14px; white-space: nowrap; font-size: 11.65px; }
.hint-area { margin-top: 2px; color: #1d2a44; font-size: 11.9px; }
.select { width: 410px; height: 21px; border: 1px solid #666; display: flex; align-items: center; justify-content: flex-end; padding-right: 4px; }
.select svg { width: 12px; height: 8px; }
.sched { display: flex; flex-direction: column; gap: 3px; padding-left: 5px; }
.sched-row { display: flex; height: 20px; }
.sched-lbl { width: 32px; line-height: 26px; }
.at { width: 19px; line-height: 26px; padding-left: 4px; }
.in-date { width: 100px; height: 20px; }
.with-cal { display: flex; justify-content: flex-end; align-items: center; padding-right: 2px; margin-right: 2px; }
.in-time { width: 70px; height: 20px; }
.calbtn { width: 20px; height: 15px; background: #eee; border: 1px solid #999; display: flex; align-items: center; justify-content: center; flex: none; }
.cal-ic { width: 14px; height: 13px; }
.approval { display: flex; flex-direction: column; gap: 3px; }
.appr-row { display: flex; gap: 2px; height: 20px; }
.in-appr { width: 100px; height: 20px; }
.appr-end { display: flex; justify-content: flex-end; padding-right: 2px; gap: 4px; }
.appr-end.last { padding-right: 3px; }
.info { width: 11px; height: 11px; margin-top: 3px; }
.appr-cal { margin-top: 3px; }
.submit { display: block; width: 150px; height: 24px; margin-top: 16px; margin-left: 1px; border: 1px solid #777; background: linear-gradient(#f0f0f0, #d6d6d6); font-family: inherit; font-size: 12.5px; color: #222; padding: 0 0 2px; }

.vscroll { width: 18px; background: #f8f8f8; border-right: 1px solid #dcdcdc; display: flex; flex-direction: column; justify-content: space-between; align-items: center; padding: 19px 0; margin-top: 2px; height: 873px; }
.vscroll svg { width: 12px; height: 7px; }
.pane { flex: 1; padding: 0 0 0 13px; }
.pane-head { height: 40px; display: flex; align-items: center; padding-top: 13px; }
.pane-title { font-size: 20.5px; font-weight: 300; color: #6a3a8a; width: 161px; line-height: 26px; }
.pane-tri { border-width: 4.5px; margin-top: -7px; border-bottom: 0; }
.pane-x { width: 10px; height: 10px; margin-left: 8px; margin-top: -7px; }
.pane-note { margin-top: 7px; line-height: 14px; font-size: 11px; color: #444; white-space: nowrap; }
.pane-sub { margin-top: 15px; line-height: 14px; font-size: 11px; font-weight: 600; color: #444; }
.field-list { width: 188px; height: 659px; margin-top: 3px; border: 1px solid #808080; padding: 0 1px; }
.field { height: 21px; display: flex; align-items: center; border-bottom: 1px solid #666; padding-left: 5px; color: #1a1a2a; font-size: 11px; white-space: nowrap; }
.field .ic16 { margin-right: 6px; }
.star { color: #f01010; margin-left: 7px; line-height: 14px; }
.link { display: block; color: #1a6dcf; font-size: 11px; line-height: 14px; white-space: nowrap; }
.adv { margin: 7px 0 0 1px; }
.actions { width: 188px; margin-top: 27px; line-height: 14px; height: 17px; border-bottom: 1px solid #ccc; font-weight: 600; font-size: 11px; color: #444; }
.act { margin-left: 10px; }
.act1 { margin-top: 4px; }
.act2 { margin-top: 4px; }

.status { height: 22px; background: #6a3a8a; color: #fff; text-align: right; padding-right: 11px; line-height: 22px; font-size: 10.75px; white-space: nowrap; }
.black { height: 8px; background: #000; display: flex; overflow: hidden; }
.black-tab { width: 48px; margin-left: 883px; background: #333; }
.black-clock { margin-left: 876px; color: #fff; font-size: 10px; line-height: 10px; padding-top: 5px; white-space: nowrap; width: 108px; }
.black-line { width: 1px; background: #777; }

.behind { height: 32px; display: flex; overflow: hidden; }
.teal { width: 95px; background: #3fc0bd; }
.desktop { flex: 1; position: relative; display: flex; background: linear-gradient(90deg, #bcd0d3 0, #b9c6cb 50%, #cfc8cf 80%, #d5cdd3 100%); font-size: 12px; color: #777; overflow: hidden; }
.old-panel { position: absolute; left: 35px; top: 0; width: 925px; height: 21px; border-left: 1px solid #b0c0c4; border-bottom: 1px solid #a8b4ba; }
.old-panel::before { content: ""; position: absolute; left: -11px; top: 0; width: 1px; height: 32px; background: #b0c0c4; }
.calendar { position: absolute; left: 984px; top: 0; width: 679px; }
.cal-top { display: flex; height: 18px; border-bottom: 1px solid #b0b0b8; }
.cal-days { display: flex; height: 14px; }
.c-cell { border-left: 1px solid #b6b6bc; padding-left: 7px; line-height: 16px; display: flex; align-items: center; gap: 3px; flex: none; white-space: nowrap; }
.cal-top .c-cell { padding-bottom: 8px; line-height: 10px; }
.c-cell:nth-child(1) { width: 97px; }
.c-cell:nth-child(2) { width: 97px; }
.c-cell:nth-child(3) { width: 99px; }
.c-cell:nth-child(4) { width: 99px; }
.c-cell:nth-child(5) { width: 97px; }
.c-cell:nth-child(6) { width: 99px; }
.c-cell:nth-child(7) { width: 90px; }
.c-ms { justify-content: flex-end; padding-right: 4px; }
.cal-days .c-cell { line-height: 20px; padding-top: 4px; }
.tri.dim { border-top-color: #999; }
.purple-block { position: absolute; left: 1712px; top: 0; width: 96px; height: 32px; background: #ae82b8; }
.bscroll { position: absolute; left: 1808px; top: 0; width: 17px; height: 32px; background: #ccc; display: flex; align-items: flex-end; justify-content: center; padding-bottom: 7px; }
.bscroll::after { content: ""; position: absolute; left: 17px; top: 0; width: 8px; height: 32px; background: #fff; }
.dialog { position: absolute; left: 380px; top: 0; width: 970px; height: 10px; background: #fff; border-bottom: 1px solid #a9bcc4; box-shadow: 0 5px 22px rgba(40, 50, 60, .45); }
</style>
